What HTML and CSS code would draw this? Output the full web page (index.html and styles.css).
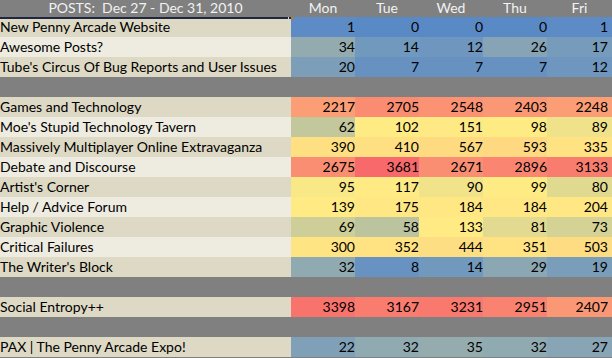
FILE: index.html
```html
<!DOCTYPE html>
<html>
<head>
<meta charset="utf-8">
<link rel="stylesheet" href="styles.css">
</head>
<body>
<table class="grid">
  <colgroup>
    <col class="c-label"><col class="c-day"><col class="c-day"><col class="c-day"><col class="c-day"><col class="c-fri">
  </colgroup>
  <thead>
    <tr class="head">
      <th class="title">POSTS:  Dec 27 - Dec 31, 2010</th>
      <th>Mon</th><th>Tue</th><th>Wed</th><th>Thu</th><th>Fri</th>
    </tr>
  </thead>
  <tbody>
    <tr class="dark"><td class="label sel">New Penny Arcade Website</td><td class="num">1</td><td class="num">0</td><td class="num">0</td><td class="num">0</td><td class="num">1</td></tr>
    <tr class="light"><td class="label">Awesome Posts?</td><td class="num">34</td><td class="num">14</td><td class="num">12</td><td class="num">26</td><td class="num">17</td></tr>
    <tr class="dark"><td class="label">Tube's Circus Of Bug Reports and User Issues</td><td class="num">20</td><td class="num">7</td><td class="num">7</td><td class="num">7</td><td class="num">12</td></tr>
    <tr class="gap"><td colspan="6"></td></tr>
    <tr class="dark"><td class="label">Games and Technology</td><td class="num">2217</td><td class="num">2705</td><td class="num">2548</td><td class="num">2403</td><td class="num">2248</td></tr>
    <tr class="light"><td class="label">Moe's Stupid Technology Tavern</td><td class="num">62</td><td class="num">102</td><td class="num">151</td><td class="num">98</td><td class="num">89</td></tr>
    <tr class="dark"><td class="label">Massively Multiplayer Online Extravaganza</td><td class="num">390</td><td class="num">410</td><td class="num">567</td><td class="num">593</td><td class="num">335</td></tr>
    <tr class="light"><td class="label">Debate and Discourse</td><td class="num">2675</td><td class="num">3681</td><td class="num">2671</td><td class="num">2896</td><td class="num">3133</td></tr>
    <tr class="dark"><td class="label">Artist's Corner</td><td class="num">95</td><td class="num">117</td><td class="num">90</td><td class="num">99</td><td class="num">80</td></tr>
    <tr class="light"><td class="label">Help / Advice Forum</td><td class="num">139</td><td class="num">175</td><td class="num">184</td><td class="num">184</td><td class="num">204</td></tr>
    <tr class="dark"><td class="label">Graphic Violence</td><td class="num">69</td><td class="num">58</td><td class="num">133</td><td class="num">81</td><td class="num">73</td></tr>
    <tr class="light"><td class="label">Critical Failures</td><td class="num">300</td><td class="num">352</td><td class="num">444</td><td class="num">351</td><td class="num">503</td></tr>
    <tr class="dark"><td class="label">The Writer's Block</td><td class="num">32</td><td class="num">8</td><td class="num">14</td><td class="num">29</td><td class="num">19</td></tr>
    <tr class="gap"><td colspan="6"></td></tr>
    <tr class="dark"><td class="label">Social Entropy++</td><td class="num">3398</td><td class="num">3167</td><td class="num">3231</td><td class="num">2951</td><td class="num">2407</td></tr>
    <tr class="gap"><td colspan="6"></td></tr>
    <tr class="dark"><td class="label">PAX | The Penny Arcade Expo!</td><td class="num">22</td><td class="num">32</td><td class="num">35</td><td class="num">32</td><td class="num">27</td></tr>
  </tbody>
</table>
<script src="script.js"></script>
</body>
</html>
```

FILE: styles.css
```css
html, body {
  margin: 0;
  padding: 0;
  background: #808080;
}

.grid {
  border-collapse: collapse;
  table-layout: fixed;
  width: 612px;
  font-family: Lato, "Liberation Sans", sans-serif;
  font-size: 14px;
  color: #000;
}

.c-label { width: 291px; }
.c-day { width: 64px; }
.c-fri { width: 65px; }

.grid th,
.grid td {
  padding: 0;
  white-space: pre;
  overflow: visible;
}

.head th {
  height: 17px;
  line-height: 16px;
  vertical-align: top;
  font-weight: normal;
  color: #f2f2f2;
  text-align: center;
  background: #808080;
}

.grid td {
  height: 20px;
  line-height: 20px;
}

.label {
  padding-left: 1px;
  text-align: left;
}

.dark .label { background: #ddd9c4; }
.light .label { background: #eeece1; }

.num {
  text-align: right;
  padding-right: 2px;
}

.num:last-child { padding-right: 4px; }

.gap td { background: #808080; }

.sel { position: relative; }

.sel::before {
  content: "";
  position: absolute;
  left: 0;
  top: 0;
  width: 288px;
  height: 2px;
  background: #1f2640;
}

.sel::after {
  content: "";
  position: absolute;
  left: 289px;
  top: 0;
  width: 2px;
  height: 2px;
  background: #1f2640;
  box-shadow: 2px 0 0 #b87a3a, 3px 0 0 #b87a3a;
}
```

FILE: script.js
```js
(function () {
  var cells = Array.prototype.slice.call(document.querySelectorAll('td.num'));
  var vals = cells.map(function (c) { return parseFloat(c.textContent); });
  var sorted = vals.slice().sort(function (a, b) { return a - b; });
  var n = sorted.length;
  var min = sorted[0], max = sorted[n - 1];
  var pos = (n - 1) * 0.5;
  var lo = Math.floor(pos), hi = Math.ceil(pos);
  var mid = sorted[lo] + (sorted[hi] - sorted[lo]) * (pos - lo);
  var blue = [90, 138, 198], yellow = [255, 235, 132], red = [248, 105, 107];
  function mix(a, b, t) {
    return a.map(function (x, i) { return Math.round(x + (b[i] - x) * t); });
  }
  cells.forEach(function (c, i) {
    var v = vals[i], col;
    if (v <= mid) col = mix(blue, yellow, (v - min) / (mid - min));
    else col = mix(yellow, red, (v - mid) / (max - mid));
    c.style.backgroundColor = 'rgb(' + col.join(',') + ')';
  });
})();
```
